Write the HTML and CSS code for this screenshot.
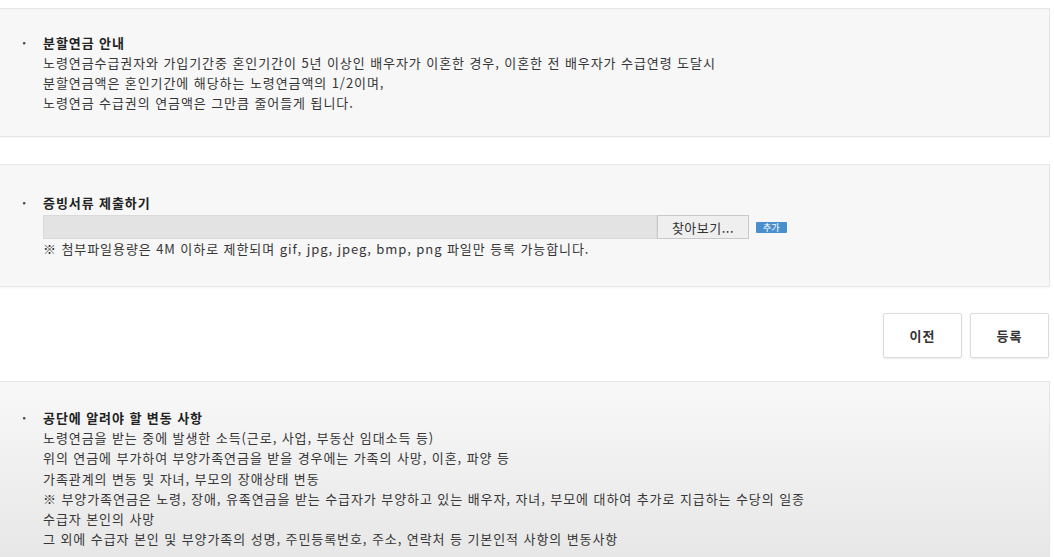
FILE: index.html
```html
<!DOCTYPE html>
<html lang="ko">
<head>
<meta charset="utf-8">
<link rel="stylesheet" href="styles.css">
</head>
<body>
<div class="page">
  <section class="box box-info">
    <div class="item">
      <span class="bullet">·</span>
      <div class="content">
        <p class="title">분할연금 안내</p>
        <p>노령연금수급권자와 가입기간중 혼인기간이 5년 이상인 배우자가 이혼한 경우, 이혼한 전 배우자가 수급연령 도달시</p>
        <p>분할연금액은 혼인기간에 해당하는 노령연금액의 1/2이며,</p>
        <p>노령연금 수급권의 연금액은 그만큼 줄어들게 됩니다.</p>
      </div>
    </div>
  </section>

  <section class="box box-file">
    <div class="item">
      <span class="bullet">·</span>
      <div class="content">
        <p class="title">증빙서류 제출하기</p>
        <div class="file-row">
          <div class="file-field"></div>
          <button class="browse" type="button">찾아보기...</button>
          <span class="add-badge">추가</span>
        </div>
        <p>※ 첨부파일용량은 4M 이하로 제한되며 gif, jpg, jpeg, bmp, png 파일만 등록 가능합니다.</p>
      </div>
    </div>
  </section>

  <div class="actions">
    <button class="btn" type="button">이전</button>
    <button class="btn" type="button">등록</button>
  </div>

  <section class="box box-notice">
    <div class="item">
      <span class="bullet">·</span>
      <div class="content">
        <p class="title">공단에 알려야 할 변동 사항</p>
        <p>노령연금을 받는 중에 발생한 소득(근로, 사업, 부동산 임대소득 등)</p>
        <p>위의 연금에 부가하여 부양가족연금을 받을 경우에는 가족의 사망, 이혼, 파양 등</p>
        <p>가족관계의 변동 및 자녀, 부모의 장애상태 변동</p>
        <p>※ 부양가족연금은 노령, 장애, 유족연금을 받는 수급자가 부양하고 있는 배우자, 자녀, 부모에 대하여 추가로 지급하는 수당의 일종</p>
        <p>수급자 본인의 사망</p>
        <p>그 외에 수급자 본인 및 부양가족의 성명, 주민등록번호, 주소, 연락처 등 기본인적 사항의 변동사항</p>
      </div>
    </div>
  </section>
</div>
</body>
</html>
```

FILE: styles.css
```css
* { box-sizing: border-box; }
html, body { margin: 0; padding: 0; }
body {
  background: #ffffff;
  font-family: "Noto Sans CJK KR", "Noto Sans", sans-serif;
  font-size: 13px;
  letter-spacing: 0.92px;
  color: #363636;
  overflow: hidden;
}
.page {
  width: 1050px;
  padding-top: 8px;
}
p { margin: 0; line-height: 20px; white-space: nowrap; }
.box {
  background: #f7f7f7;
  border: 1px solid #e6e6e6;
  border-left: none;
  box-shadow: 0 1px 2px rgba(0,0,0,0.04);
}
.box-info { padding: 24px 0 23px 0; }
.box-file { margin-top: 27px; padding: 28px 0 27px 0; }
.box-notice {
  margin-top: 23px;
  padding: 26px 0 30px 0;
  background: linear-gradient(#f8f8f8, #e5e5e5);
}
.box-notice p { line-height: 20.2px; }
.item { display: flex; padding-left: 22px; }
.bullet { width: 21px; line-height: 20px; color: #444; font-weight: bold; letter-spacing: 0; }
.content { flex: 1; }
.title { font-weight: bold; color: #222; }
.file-row { display: flex; align-items: flex-start; height: 26px; padding-top: 2px; }
.file-field {
  width: 614px;
  height: 24px;
  background: #e3e3e3;
  border: 1px solid #dadada;
}
.browse {
  width: 92px;
  height: 24px;
  margin: 0;
  border: 1px solid #c9c9c9;
  background: #efefef;
  font-family: inherit;
  font-size: 13px;
  letter-spacing: 0.5px;
  color: #333;
  padding: 0;
}
.add-badge {
  margin: 7px 0 0 7px;
  height: 11px;
  padding: 0 7px;
  background: #4a8fcd;
  color: #fff;
  font-size: 9px;
  line-height: 11px;
  letter-spacing: 0;
  border-radius: 1px;
}
.actions {
  display: flex;
  justify-content: flex-end;
  gap: 8px;
  padding: 26px 1px 0 0;
}
.btn {
  width: 79px;
  height: 45px;
  margin: 0;
  background: #fff;
  border: 1px solid #dcdcdc;
  border-radius: 2px;
  box-shadow: 0 1px 2px rgba(0,0,0,0.08);
  font-family: inherit;
  font-size: 13px;
  font-weight: bold;
  letter-spacing: 1px;
  color: #333;
}
```
